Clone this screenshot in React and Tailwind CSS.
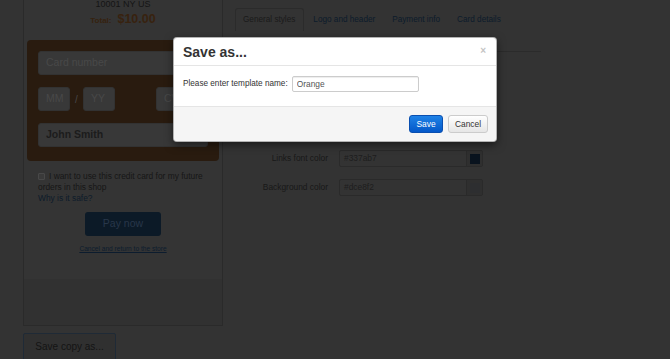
import { useState } from "react";

const colorRows = [
  { label: "Main font color", value: "#333333", swatch: "bg-[#141414]" },
  { label: "Header font color", value: "#ffffff", swatch: "bg-[#333333]" },
  { label: "Total font color", value: "#e8852f", swatch: "bg-[#2e1a09]" },
  { label: "Links font color", value: "#337ab7", swatch: "bg-[#09131e]" },
  { label: "Background color", value: "#dce8f2", swatch: "bg-[#2d2e30]" },
];

const tabs = ["General styles", "Logo and header", "Payment info", "Card details"];

function CardInput({ placeholder, className = "", bold = false }) {
  return (
    <div
      className={`flex h-[24px] items-center rounded-[3px] border border-[#323232] bg-[#383838] px-[7px] text-[10.5px] ${
        bold ? "font-bold text-[#1c1c1c]" : "text-[#484848]"
      } ${className}`}
    >
      {placeholder}
    </div>
  );
}

function PaymentPanel() {
  return (
    <div className="ml-[23px] w-[200px]">
      <div className="border-x border-b border-[#2a2a2a]">
        <div className="bg-[#343434] pb-[26px]">
          <p className="-mt-[1px] text-center text-[9px] leading-[11px] text-[#151515]">10001 NY US</p>
          <p className="text-center leading-[15px]">
            <span className="text-[8px] font-bold text-[#36220f]">Total:</span>
            <span className="ml-[6px] text-[12.5px] font-bold text-[#38220f]">$10.00</span>
          </p>

          <div className="ml-[3px] mt-[12px] flex w-[192px] flex-col gap-[12px] rounded-[4px] bg-[#291b0f] px-[11px] pb-[14px] pt-[11px]">
            <CardInput placeholder="Card number" />
            <div className="flex items-center justify-between">
              <div className="flex items-center">
                <CardInput placeholder="MM" className="w-[32px]" />
                <span className="w-[13px] text-center text-[10px] text-[#484848]">/</span>
                <CardInput placeholder="YY" className="w-[32px]" />
              </div>
              <CardInput placeholder="CVC" className="w-[52px]" />
            </div>
            <CardInput placeholder="John Smith" bold />
          </div>

          <div className="mt-[10px] px-[14px] text-[8.4px] leading-[11px] text-[#161616]">
            <label>
              <input
                type="checkbox"
                className="mr-[4px] inline-block h-[7px] w-[7px] appearance-none rounded-[1px] border border-[#484848] bg-[#3a3a3a] align-[-1px]"
              />
              I want to use this credit card for my future orders in this shop
            </label>
            <p className="text-[#0d1b2a]">Why is it safe?</p>
          </div>

          <div className="mt-[8px] flex justify-center">
            <button className="h-[24px] w-[76px] rounded-[3px] bg-[#0c1a27] text-[10.5px] text-[#28374a]">Pay now</button>
          </div>
          <p className="mt-[9px] text-center text-[6.6px] leading-[8px] text-[#0c1c2e] underline">
            Cancel and return to the store
          </p>
        </div>
        <div className="h-[46px] bg-[#313131]" />
      </div>

      <button className="mt-[7px] h-[28px] w-[93px] rounded-[2px] border border-[#1f2a36] bg-[#303030] pb-[2px] text-[10px] text-[#141414]">
        Save copy as...
      </button>
    </div>
  );
}

function StylesPanel() {
  return (
    <div className="ml-[12px] mt-[8px] w-[306px]">
      <ul className="flex">
        {tabs.map((tab, i) => (
          <li
            key={tab}
            className={`py-[5px] text-[8.2px] leading-[12px] ${
              i === 0
                ? "rounded-t-[3px] border border-b-0 border-[#2b2b2b] pl-[7px] pr-[8px] text-[#1a1a1a]"
                : "ml-[1px] px-[8px] pt-[6px] text-[#0c1b2b]"
            }`}
          >
            {tab}
          </li>
        ))}
      </ul>
      <div className="mt-[20px] border-t border-[#2b2b2b]" />

      <div className="mt-[11px] flex flex-col gap-[12px]">
        {colorRows.map((row) => (
          <div key={row.label} className="flex items-center">
            <span className="w-[93px] text-right text-[8.4px] text-[#181818]">{row.label}</span>
            <div className="ml-[11px] flex h-[17px] w-[144px] overflow-hidden rounded-[2px] border border-[#2a2a2a] bg-[#333]">
              <span className="flex-1 pl-[4px] text-[8.4px] leading-[15px] text-[#1d1d1d]">{row.value}</span>
              <span className="flex w-[16px] items-center justify-center border-l border-[#2a2a2a] bg-[#2f2f2f]">
                <span className={`h-[10px] w-[10px] ${row.swatch}`} />
              </span>
            </div>
          </div>
        ))}
      </div>
    </div>
  );
}

function SaveAsModal() {
  const [name, setName] = useState("Orange");

  return (
    <div className="absolute left-[173px] top-[37px] w-[324px] rounded-[4px] border border-black/30 bg-white shadow-[0_3px_9px_rgba(0,0,0,0.5)]">
      <div className="flex items-center justify-between border-b border-[#e5e5e5] px-[9px] pb-[4px] pt-[6px]">
        <h3 className="text-[14px] font-bold leading-[17px] text-[#333]">Save as...</h3>
        <button className="-mt-[3px] mr-[1px] text-[10px] font-bold leading-none text-[#c4c4c4]">×</button>
      </div>
      <div className="flex items-center gap-[4px] px-[9px] pb-[14px] pt-[10px]">
        <label className="text-[8.2px] text-[#333]">Please enter template name:</label>
        <input
          value={name}
          onChange={(event) => setName(event.target.value)}
          className="h-[16px] w-[127px] rounded-[2px] border border-[#ccc] px-[4px] text-[8.4px] text-[#555] shadow-[inset_0_1px_1px_rgba(0,0,0,0.075)] outline-none"
        />
      </div>
      <div className="flex justify-end gap-[5px] rounded-b-[4px] border-t border-[#e5e5e5] bg-[#f5f5f5] pb-[8px] pr-[8px] pt-[8px]">
        <button className="h-[18px] w-[34px] rounded-[3px] border border-[#0a4fb0] bg-gradient-to-b from-[#1f82e6] to-[#0558c9] text-[8.4px] text-white">
          Save
        </button>
        <button className="h-[18px] w-[40px] rounded-[3px] border border-[#ccc] bg-gradient-to-b from-white to-[#e6e6e6] text-[8.4px] text-[#333]">
          Cancel
        </button>
      </div>
    </div>
  );
}

export default function App() {
  return (
    <div className="relative h-[359px] w-[670px] overflow-hidden bg-[#333] font-['Liberation_Sans',Arial,sans-serif]">
      <div className="flex items-start">
        <PaymentPanel />
        <StylesPanel />
      </div>
      <SaveAsModal />
    </div>
  );
}
